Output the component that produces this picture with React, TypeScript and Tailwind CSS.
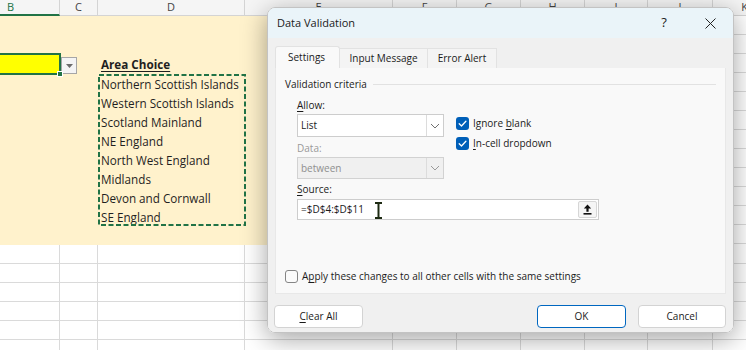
import React from "react";

const COLS = [
  { k: "B", w: "w-[60px]" },
  { k: "C", w: "w-[38px]" },
  { k: "D", w: "w-[147px]" },
  { k: "E", w: "w-[148px]" },
  { k: "F", w: "w-[64px]" },
  { k: "G", w: "w-[64px]" },
  { k: "H", w: "w-[64px]" },
  { k: "I", w: "w-[63px]" },
  { k: "J", w: "w-[65px]" },
  { k: "K", w: "w-[64px]" },
];

const AREAS = [
  "Northern Scottish Islands",
  "Western Scottish Islands",
  "Scotland Mainland",
  "NE England",
  "North West England",
  "Midlands",
  "Devon and Cornwall",
  "SE England",
];

const U = ({ children }: { children: React.ReactNode }) => (
  <span className="underline underline-offset-[2px] decoration-[1px]">{children}</span>
);

function Header() {
  return (
    <div className="flex h-[16px] shrink-0 bg-[#f5f5f5] font-['Open_Sans',sans-serif] text-[11px]">
      {COLS.map((c) =>
        c.k === "B" ? (
          <div
            key={c.k}
            className={`${c.w} shrink-0 h-full border-r border-[#d4d4d4] border-b-2 border-b-[#217346] pl-[7px] flex items-center text-[#217346]`}
          >
            B
          </div>
        ) : (
          <div
            key={c.k}
            className={`${c.w} shrink-0 h-full border-r border-b border-[#d4d4d4] flex items-center justify-center text-[#444]`}
          >
            {c.k}
          </div>
        )
      )}
    </div>
  );
}

function WhiteCol({ w }: { w: string }) {
  return (
    <div className={`${w} shrink-0 flex flex-col bg-white`}>
      {Array.from({ length: 13 }).map((_, i) => (
        <div key={i} className="h-[19px] shrink-0 border-r border-b border-[#dadada]" />
      ))}
    </div>
  );
}

function CreamRegion() {
  return (
    <div className="flex h-[229px] shrink-0 overflow-hidden font-['Open_Sans',sans-serif] text-[11.7px] text-[#1f1f1f]">
      {/* B */}
      <div className="w-[60px] shrink-0 bg-[#fff2cc] flex flex-col">
        <div className="h-[37px] shrink-0" />
        <div className="relative w-[61px] h-[22px] shrink-0 bg-[#ffff00] border-2 border-l-0 border-[#217346]">
          <div className="absolute right-[-4px] bottom-[-4px] w-[6px] h-[6px] bg-[#217346] border border-white" />
        </div>
      </div>
      {/* C */}
      <div className="w-[38px] shrink-0 bg-[#fff2cc] flex flex-col">
        <div className="h-[41px] shrink-0" />
        <div className="ml-[1px] w-[16px] h-[17px] border border-[#a6a6a6] bg-[#f4f4f4] flex items-center justify-center">
          <svg width="7" height="4" viewBox="0 0 7 4">
            <path d="M0 0 H7 L3.5 4 Z" fill="#6b6b6b" />
          </svg>
        </div>
      </div>
      {/* D */}
      <div className="w-[147px] shrink-0 bg-[#fff2cc] flex flex-col">
        <div className="h-[38px] shrink-0" />
        <div className="h-[20px] shrink-0 flex items-center pl-[3px] pt-[2px] font-bold underline underline-offset-[2px]">
          Area Choice
        </div>
        <div className="relative w-[148px] h-[152px] shrink-0 flex flex-col">
          <svg className="absolute inset-0" width="148" height="152" viewBox="0 0 148 152">
            <rect x="1" y="1" width="146" height="150" fill="none" stroke="#217346" strokeWidth="2" strokeDasharray="5 2.5" />
          </svg>
          {AREAS.map((a) => (
            <div key={a} className="h-[19px] shrink-0 flex items-center pl-[3px] pt-[2px] whitespace-nowrap">
              {a}
            </div>
          ))}
        </div>
      </div>
      {/* E */}
      <div className="w-[148px] shrink-0 bg-[#fff2cc]" />
      <WhiteCol w="w-[64px]" />
      <WhiteCol w="w-[64px]" />
      <WhiteCol w="w-[64px]" />
      <WhiteCol w="w-[63px]" />
      <WhiteCol w="w-[65px]" />
      <WhiteCol w="w-[64px]" />
    </div>
  );
}

function WhiteRows() {
  return (
    <div className="flex flex-col">
      {Array.from({ length: 6 }).map((_, r) => (
        <div key={r} className="flex h-[19px] shrink-0">
          {COLS.map((c) => (
            <div key={c.k} className={`${c.w} shrink-0 h-full border-r border-b border-[#dadada] bg-white`} />
          ))}
        </div>
      ))}
    </div>
  );
}

function Check({ checked }: { checked: boolean }) {
  return checked ? (
    <div className="w-[13px] h-[13px] shrink-0 rounded-[3px] bg-[#005fb8] flex items-center justify-center">
      <svg width="13" height="13" viewBox="0 0 13 13">
        <path d="M3.2 6.7 L5.5 9 L9.9 4.3" fill="none" stroke="white" strokeWidth="1.3" strokeLinecap="round" strokeLinejoin="round" />
      </svg>
    </div>
  ) : (
    <div className="w-[13px] h-[13px] shrink-0 rounded-[3px] border border-[#858585] bg-[#fbfbfb]" />
  );
}

function Chevron({ color }: { color: string }) {
  return (
    <svg width="10" height="6" viewBox="0 0 10 6">
      <path d="M1 1 L5 5 L9 1" fill="none" stroke={color} strokeWidth="1" />
    </svg>
  );
}

function Dialog() {
  return (
    <div className="absolute left-[267px] top-[7px] w-[467px] h-[326px] rounded-[8px] overflow-hidden border border-[#c3c3c3] shadow-[0_6px_26px_rgba(0,0,0,0.36)] flex flex-col font-['Open_Sans',sans-serif] text-[10px] text-[#1b1b1b]">
      {/* Title bar */}
      <div className="h-[30px] shrink-0 bg-[#eaf4f9] flex items-center">
        <div className="pl-[9px] flex-1 text-[11px] text-[#1a1a1a]">Data Validation</div>
        <div className="w-[46px] h-full flex items-center justify-center text-[13px] text-[#222]">?</div>
        <div className="w-[46px] h-full flex items-center justify-center">
          <svg width="11" height="11" viewBox="0 0 11 11">
            <path d="M0.5 0.5 L10.5 10.5 M10.5 0.5 L0.5 10.5" stroke="#222" strokeWidth="1" />
          </svg>
        </div>
      </div>
      {/* Body */}
      <div className="flex-1 bg-[#f0f0f0] px-[7px] pt-[8px] flex flex-col">
        {/* Tabs */}
        <div className="flex items-end h-[22px] shrink-0">
          <div className="w-[65px] h-[22px] bg-[#f9f9f9] border border-b-0 border-[#e2e2e2] rounded-t-[3px] flex items-center pl-[12px]">
            Settings
          </div>
          <div className="w-[88px] h-[20px] bg-[#f4f4f4] border border-b-0 border-l-0 border-[#e2e2e2] flex items-center justify-center">
            Input Message
          </div>
          <div className="w-[69px] h-[20px] bg-[#f4f4f4] border border-b-0 border-l-0 border-[#e2e2e2] flex items-center justify-center">
            Error Alert
          </div>
        </div>
        {/* Panel */}
        <div className="w-[451px] h-[226px] shrink-0 bg-[#f9f9f9] border border-t-0 border-[#e8e8e8] flex flex-col px-[9px]">
          <div className="flex items-center h-[14px] mt-[9px] shrink-0">
            <span>Validation criteria</span>
            <div className="flex-1 h-px bg-[#e2e2e2] ml-[6px] mr-[0px]" />
          </div>
          <div className="pl-[12px] flex flex-col">
            <div className="h-[14px] mt-[7px] flex items-center">
              <span><U>A</U>llow:</span>
            </div>
            <div className="flex items-start h-[23px] mt-[2px] overflow-visible">
              <div className="w-[147px] h-[23px] shrink-0 bg-white border border-[#cdcdcd] flex">
                <div className="flex-1 flex items-center pl-[3px]">List</div>
                <div className="w-[17px] border-l border-[#dcdcdc] flex items-center justify-center">
                  <Chevron color="#707070" />
                </div>
              </div>
              <div className="ml-[12px] mt-[3px] flex flex-col gap-[7px]">
                <div className="flex items-center gap-[4px] h-[13px]">
                  <Check checked />
                  <span>Ignore <U>b</U>lank</span>
                </div>
                <div className="flex items-center gap-[4px] h-[13px]">
                  <Check checked />
                  <span><U>I</U>n-cell dropdown</span>
                </div>
              </div>
            </div>
            <div className="h-[14px] mt-[4px] flex items-center text-[#9a9a9a]">Data:</div>
            <div className="w-[147px] h-[22px] mt-[2px] bg-[#f0f0f0] border border-[#d2d2d2] flex">
              <div className="flex-1 flex items-center pl-[3px] text-[#8f8f8f]">between</div>
              <div className="w-[17px] border-l border-[#dcdcdc] flex items-center justify-center">
                <Chevron color="#9a9a9a" />
              </div>
            </div>
            <div className="h-[14px] mt-[3px] flex items-center">
              <span><U>S</U>ource:</span>
            </div>
            <div className="relative w-[302px] h-[21px] mt-[3px] bg-white border border-[#cdcdcd] flex">
              <div className="flex-1 flex items-center pl-[3px]">=$D$4:$D$11</div>
              <div className="w-[19px] my-[1px] mr-[1px] rounded-[2px] border border-[#d6d6d6] bg-[#f5f5f5] flex items-center justify-center">
                <svg width="9" height="11" viewBox="0 0 9 11">
                  <path d="M4.5 0.5 L0.8 4.6 H3.4 V7.8 H5.6 V4.6 H8.2 Z" fill="#111" />
                  <rect x="0.5" y="9" width="8" height="1.6" fill="#111" />
                </svg>
              </div>
              <svg className="absolute left-[76px] top-[2px]" width="9" height="17" viewBox="0 0 9 17">
                <path d="M1 1 H8 M4.5 1 V16 M1 16 H8" stroke="#1d2a12" strokeWidth="2" fill="none" />
              </svg>
            </div>
          </div>
          <div className="mt-auto mb-[10px] flex items-center gap-[4px] h-[13px]">
            <Check checked={false} />
            <span>A<U>p</U>ply these changes to all other cells with the same settings</span>
          </div>
        </div>
        {/* Buttons */}
        <div className="flex mt-[11px] h-[23px] shrink-0">
          <div className="w-[89px] h-[23px] -ml-[1px] bg-white border border-[#d3d3d3] rounded-[4px] flex items-center justify-center">
            <span><U>C</U>lear All</span>
          </div>
          <div className="flex-1" />
          <div className="w-[89px] h-[23px] bg-white border border-[#0067c0] rounded-[4px] flex items-center justify-center">
            OK
          </div>
          <div className="w-[88px] h-[23px] ml-[12px] bg-white border border-[#d3d3d3] rounded-[4px] flex items-center justify-center">
            Cancel
          </div>
        </div>
      </div>
    </div>
  );
}

export default function App() {
  return (
    <div className="relative w-[746px] h-[350px] overflow-hidden bg-white">
      <div className="flex flex-col w-[777px]">
        <Header />
        <CreamRegion />
        <WhiteRows />
      </div>
      <Dialog />
    </div>
  );
}
